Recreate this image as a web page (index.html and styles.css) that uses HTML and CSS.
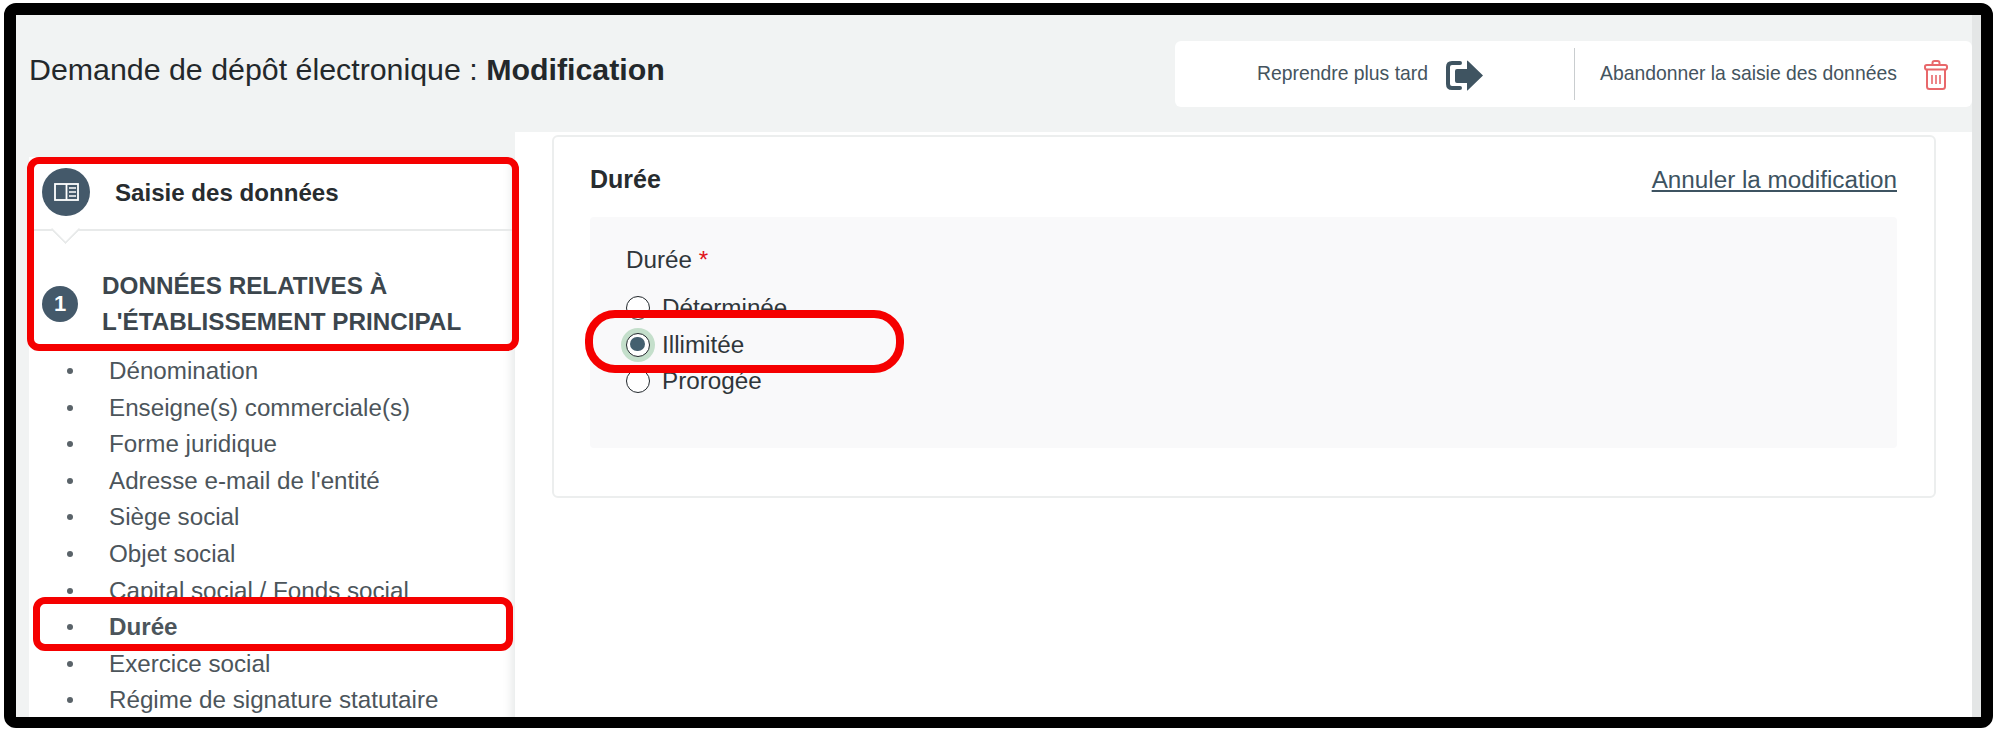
FILE: index.html
```html
<!DOCTYPE html>
<html lang="fr">
<head>
    <meta charset="UTF-8">
    <meta name="viewport" content="width=device-width, initial-scale=1.0">
    <title>Demande de dépôt électronique</title>
    <link rel="stylesheet" href="styles.css">
</head>
<body>
    <div class="frame">
        <div class="page">
            <div class="page-main">
                <div class="top-bar">
                    <h1 class="page-title">Demande de dépôt électronique : <strong>Modification</strong></h1>
                    <div class="top-actions">
                        <a class="top-action later">
                            <span>Reprendre plus tard</span>
                            <svg class="icon-later" viewBox="0 0 38 31">
                                <path d="M15 3H7Q3 3 3 7V24Q3 28 7 28H15" fill="none" stroke="#3f5461" stroke-width="4" stroke-linecap="round"/>
                                <path d="M10 11Q10 9 12 9H22V1Q22 0 23 1L38 15.5L23 30Q22 31 22 30V23H12Q10 23 10 21Z" fill="#3f5461"/>
                            </svg>
                        </a>
                        <a class="top-action quit">
                            <span>Abandonner la saisie des données</span>
                            <svg class="icon-trash" viewBox="0 0 24 30">
                                <g fill="none" stroke="#e8686b" stroke-width="2">
                                    <path d="M8.5 5V3Q8.5 1 10.5 1H13.5Q15.5 1 15.5 3V5"/>
                                    <rect x="1" y="5" width="22" height="4.5" rx="1.8"/>
                                    <path d="M3 9.5V26.5Q3 29 5.5 29H18.5Q21 29 21 26.5V9.5"/>
                                    <path d="M8 15V24M12 15V24M16 15V24" stroke-width="1.6"/>
                                </g>
                            </svg>
                        </a>
                    </div>
                </div>
                <div class="content">
                    <aside class="side-col">
                        <div class="side-panel">
                            <div class="step-head">
                                <span class="step-icon">
                                    <svg viewBox="0 0 25 18" width="25" height="18">
                                        <rect x="1" y="1" width="23" height="16" fill="none" stroke="#fff" stroke-width="1.8"/>
                                        <path d="M12.5 1V17" stroke="#fff" stroke-width="1.8"/>
                                        <path d="M15 5H22M15 9H22M15 13H22" stroke="#fff" stroke-width="1.5"/>
                                    </svg>
                                </span>
                                <span class="step-name">Saisie des données</span>
                            </div>
                            <div class="section-head">
                                <span class="section-num">1</span>
                                <span class="section-name">DONNÉES RELATIVES À L'ÉTABLISSEMENT PRINCIPAL</span>
                            </div>
                            <ul class="section-list">
                                <li>Dénomination</li>
                                <li>Enseigne(s) commerciale(s)</li>
                                <li>Forme juridique</li>
                                <li>Adresse e-mail de l'entité</li>
                                <li>Siège social</li>
                                <li>Objet social</li>
                                <li>Capital social / Fonds social</li>
                                <li class="current">Durée</li>
                                <li>Exercice social</li>
                                <li>Régime de signature statutaire</li>
                            </ul>
                        </div>
                    </aside>
                    <main class="main-col">
                        <section class="card">
                            <div class="card-head">
                                <h2 class="card-title">Durée</h2>
                                <a class="cancel-link">Annuler la modification</a>
                            </div>
                            <div class="field-box">
                                <div class="field-label">Durée <span class="required">*</span></div>
                                <div class="radio-row"><span class="radio"></span>Déterminée</div>
                                <div class="radio-row"><span class="radio checked"></span>Illimitée</div>
                                <div class="radio-row"><span class="radio"></span>Prorogée</div>
                            </div>
                        </section>
                    </main>
                </div>
            </div>
            <div class="scroll-strip"></div>

            <!-- annotations rouges -->
            <div class="mark mark-head"></div>
            <div class="mark mark-item"></div>
            <div class="mark mark-radio"></div>
        </div>
    </div>
</body>
</html>
```

FILE: styles.css
```css
html, body {
    margin: 0;
    padding: 0;
    height: 100%;
    background-color: #fff;
    overflow: hidden;
}
body {
    font-family: "Liberation Sans", Arial, sans-serif;
    color: #2f363a;
    padding: 3px 2px 2px 4px;
    box-sizing: border-box;
}
.frame {
    height: 100%;
    box-sizing: border-box;
    border-style: solid;
    border-color: #000;
    border-width: 12px 12px 11px 12px;
    border-radius: 12px;
}
.page {
    position: relative;
    display: flex;
    height: 100%;
    overflow: hidden;
    background-color: #f1f3f3;
}
.page-main {
    flex: 1;
    min-width: 0;
    display: flex;
    flex-direction: column;
}
.scroll-strip {
    width: 9px;
    background-color: #e4e6e6;
}
.top-bar {
    height: 117px;
    flex-shrink: 0;
    display: flex;
    justify-content: space-between;
    padding: 26px 0 0 13px;
    box-sizing: border-box;
}
.page-title {
    margin: 0;
    font-size: 30.35px;
    font-weight: normal;
    line-height: 32px;
    padding-top: 13px;
    color: #23282b;
}
.top-actions {
    width: 797px;
    height: 66px;
    display: flex;
    align-items: center;
    background-color: #fff;
    border-radius: 6px;
    font-size: 19.35px;
    color: #44545e;
}
.top-action {
    height: 52px;
    display: flex;
    align-items: center;
}
.top-action span {
    margin-top: -2px;
}
.later {
    width: 400px;
    justify-content: flex-end;
    gap: 17px;
    padding-right: 91px;
    box-sizing: border-box;
    border-right: 1px solid #c9cdcf;
}
.quit {
    flex: 1;
    gap: 27px;
    padding-left: 25px;
}
.icon-later {
    width: 38px;
    height: 31px;
    margin-top: 2px;
}
.icon-trash {
    width: 24px;
    height: 30px;
    margin-top: 2px;
}
.content {
    flex: 1;
    min-height: 0;
    display: flex;
}
.side-col {
    width: 499px;
    flex-shrink: 0;
    padding: 25px 0 0 13px;
    box-sizing: border-box;
}
.side-panel {
    height: 100%;
    background-color: #fff;
    box-shadow: inset -14px 0 12px -12px #e2e4e4;
    overflow: hidden;
}
.step-head {
    position: relative;
    height: 74px;
    display: flex;
    align-items: center;
    gap: 25px;
    padding: 0 0 3px 13px;
    box-sizing: border-box;
    margin-right: 3px;
    border-bottom: 2px solid #e8eaea;
}
.step-head::after {
    content: "";
    position: absolute;
    left: 26px;
    bottom: -11px;
    width: 19px;
    height: 19px;
    background-color: #fff;
    border-right: 2px solid #e8eaea;
    border-bottom: 2px solid #e8eaea;
    transform: rotate(45deg);
    clip-path: polygon(100% -10%, 100% 100%, -10% 100%);
}
.step-icon {
    width: 48px;
    height: 48px;
    flex-shrink: 0;
    border-radius: 50%;
    background-color: #44596a;
    display: flex;
    align-items: center;
    justify-content: center;
}
.step-name {
    font-size: 24.1px;
    font-weight: bold;
    color: #272c2f;
    padding-top: 2px;
}
.section-head {
    display: flex;
    align-items: center;
    gap: 24px;
    padding: 37px 20px 0 13px;
}
.section-num {
    width: 36px;
    height: 36px;
    flex-shrink: 0;
    border-radius: 50%;
    background-color: #44596a;
    color: #fff;
    font-size: 22px;
    font-weight: bold;
    display: flex;
    align-items: center;
    justify-content: center;
}
.section-name {
    font-size: 24.25px;
    font-weight: bold;
    line-height: 36px;
    color: #3c464d;
}
.section-list {
    list-style: none;
    margin: 0;
    padding: 13px 0 0 0;
    font-size: 24.2px;
    line-height: 36.6px;
    color: #4c555b;
}
.section-list li {
    position: relative;
    padding-left: 80px;
}
.section-list li::before {
    content: "";
    position: absolute;
    left: 38px;
    top: 15px;
    width: 6px;
    height: 6px;
    border-radius: 50%;
    background-color: #5a6369;
}
.section-list .current {
    font-weight: bold;
}
.main-col {
    flex: 1;
    min-width: 0;
    background-color: #fff;
    padding: 3px 36px 0 37px;
}
.card {
    height: 363px;
    box-sizing: border-box;
    padding: 24px 37px 0 36px;
    border: 2px solid #eceeee;
    border-radius: 6px;
}
.card-head {
    display: flex;
    justify-content: space-between;
    align-items: center;
    height: 36px;
}
.card-title {
    margin: 0;
    font-size: 25px;
    font-weight: bold;
    color: #272c2f;
}
.cancel-link {
    font-size: 24.25px;
    color: #3d5361;
    text-decoration: underline;
    margin-top: 2px;
}
.field-box {
    height: 231px;
    margin-top: 20px;
    box-sizing: border-box;
    padding: 26px 36px 0;
    background-color: #f9f9fa;
    border-radius: 4px;
    font-size: 24.25px;
    color: #2f363a;
}
.field-label {
    height: 47px;
    line-height: 34px;
}
.required {
    color: #e0141c;
}
.radio-row {
    display: flex;
    align-items: center;
    gap: 12px;
    height: 36.6px;
}
.radio {
    position: relative;
    width: 24px;
    height: 24px;
    box-sizing: border-box;
    border: 1.6px solid #22282c;
    border-radius: 50%;
    background-color: #fff;
}
.radio.checked {
    box-shadow: 0 0 0 5px #c4dfcb;
}
.radio.checked::after {
    content: "";
    position: absolute;
    left: 3.2px;
    top: 3.2px;
    width: 14.4px;
    height: 14.4px;
    border-radius: 50%;
    background-color: #44606f;
}
.mark {
    position: absolute;
    box-sizing: border-box;
    border: 7px solid #f50000;
}
.mark-head {
    left: 11px;
    top: 142px;
    width: 492px;
    height: 194px;
    border-radius: 12px;
}
.mark-item {
    left: 17px;
    top: 582px;
    width: 480px;
    height: 54px;
    border-radius: 12px;
}
.mark-radio {
    left: 569px;
    top: 295px;
    width: 319px;
    height: 63px;
    border-width: 8px;
    border-radius: 30px;
}
```
